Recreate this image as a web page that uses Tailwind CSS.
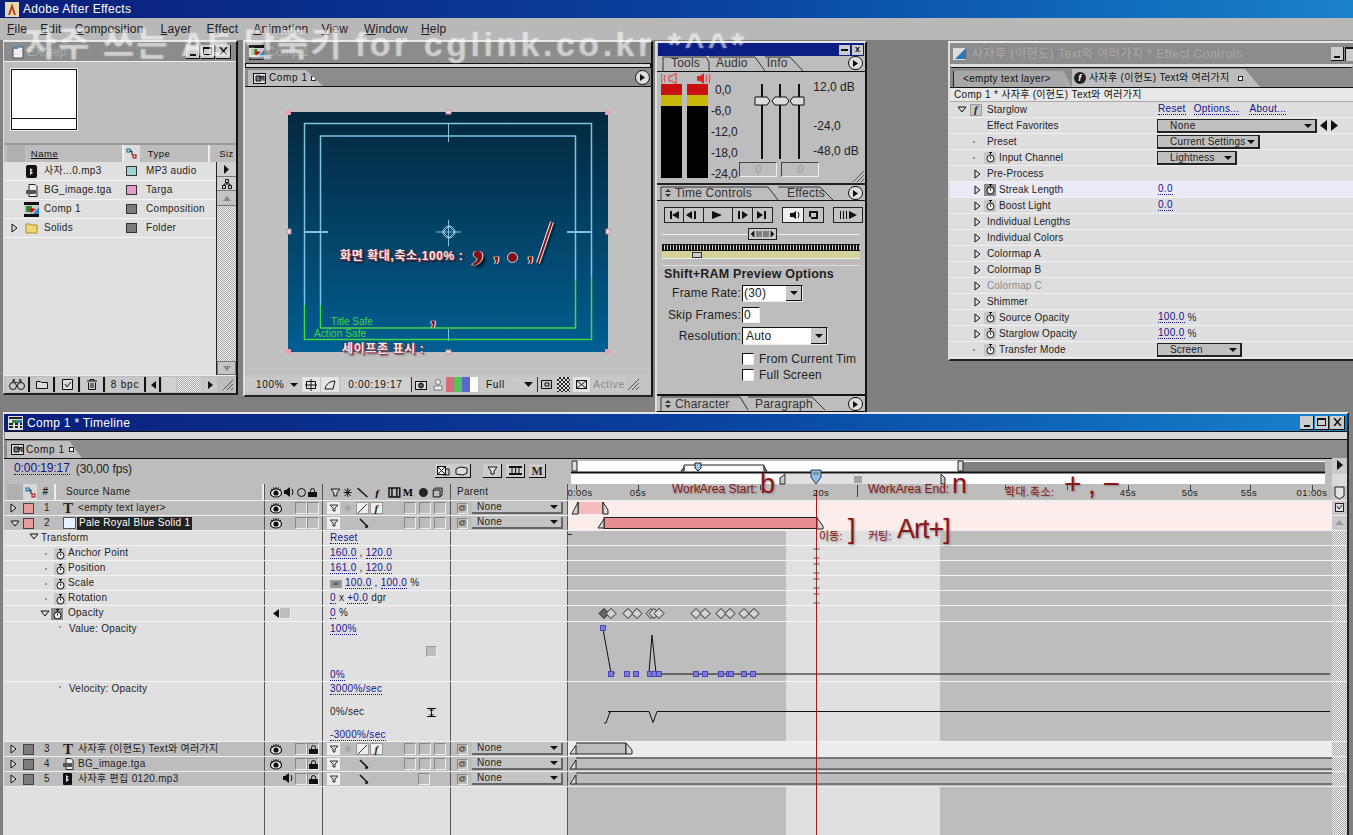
<!DOCTYPE html>
<html lang="en">
<head>
	<meta charset="UTF-8">
	<title>Adobe After Effects</title>
	<script src="https://cdn.jsdelivr.net/npm/@tailwindcss/browser@4"></script>
</head>
<body class="m-0">
<div id="app" class="relative w-[1353px] h-[835px] overflow-hidden bg-[#808080] text-[10px] leading-none text-[#111] font-['Liberation_Sans','Noto_Sans_CJK_KR',sans-serif]">

	<!-- app title + menu -->
	<div class="flex items-center h-[18px] pl-[5px] gap-[4px] bg-gradient-to-r from-[#0a1f7a] via-[#0a3f9e] to-[#1a82cc] text-white text-[12px]">
		<svg class="w-[14px] h-[15px]" viewBox="0 0 14 15"><rect width="14" height="15" fill="#e8d8b0"/><path d="M7 1L3 13h2l2-6 2 6h2z" fill="#b8401c"/></svg>
		<span class="tracking-[.3px]">Adobe After Effects</span>
	</div>
	<div id="menu" class="flex items-center h-[22px] bg-[#b8b8b8] text-[12px] text-[#222] pl-[7px] gap-[13px] tracking-[.2px]">
		<span><u>F</u>ile</span><span><u>E</u>dit</span><span><u>C</u>omposition</span><span class="ml-[4px]"><u>L</u>ayer</span><span class="ml-[2px]">E<u>f</u>fect</span><span class="ml-[2px]"><u>A</u>nimation</span><span><u>V</u>iew</span><span class="ml-[3px]"><u>W</u>indow</span><span><u>H</u>elp</span>
	</div>

	<!-- project window -->
	<div class="absolute left-[3px] top-[40px] w-[235px] h-[355px] flex flex-col bg-[#bdbdbd] border-t-2 border-[#e8e8e8] border-l border-r-2 border-b-2 border-r-[#111] border-b-[#222] border-l-[#ddd]">
		<div class="flex items-center h-[19px] bg-[#8c8c8c] pl-[8px] pr-[5px] text-[#aaa] text-[12px]">
			<svg class="w-[12px] h-[14px] mr-[3px]" viewBox="0 0 12 14"><rect x="1" y="2" width="10" height="11" fill="#eee" stroke="#555"/><rect x="1" y="1" width="5" height="3" fill="#4a90c8"/></svg>
			<span class="flex-1">EX.aep *</span>
			<span id="winBtns1" class="flex gap-[1px]"></span>
		</div>
		<div class="h-[82px] pl-[7px] pt-[7px] border-t border-[#eee]">
			<div class="w-[66px] h-[61px] border border-[#111] outline outline-1 outline-[#eee] bg-white flex flex-col justify-end"><div class="h-[11px] border-t border-[#111]"></div></div>
		</div>
		<div class="flex h-[19px] items-center bg-[#bdbdbd] border-t-2 border-[#999] text-[9.5px] tracking-[.5px]">
			<div class="w-[18px] h-full ml-[3px] bg-[#b0b0b0]"></div>
			<div class="w-[100px] pl-[6px] border-r-2 border-[#eee] h-full flex items-center"><u>Name</u></div>
			<div class="w-[16px] h-full flex items-center justify-center bg-[#ddd]"><svg class="w-[11px] h-[11px]" viewBox="0 0 11 11"><rect x="1" y="1" width="3" height="3" fill="none" stroke="#06a"/><rect x="7" y="7" width="3" height="3" fill="none" stroke="#a00"/><path d="M4 3h2v4" stroke="#111" fill="none"/></svg></div>
			<div class="w-[71px] pl-[8px] border-r-2 border-[#eee] h-full flex items-center">Type</div>
			<div class="pl-[9px] w-[26px] overflow-hidden whitespace-nowrap">Siz</div>
		</div>
		<div class="flex flex-1 min-h-0">
			<div id="projRows" class="w-[213px] bg-[#e0e0e0] border-r border-[#222]"></div>
			<div class="flex-1 flex flex-col bg-[repeating-conic-gradient(#aaa_0_25%,#eee_0_50%)] bg-[length:2px_2px]">
				<div class="h-[15px] bg-[#d0d0d0] flex items-center justify-center border-b border-[#777]"><svg class="w-[7px] h-[9px]" viewBox="0 0 7 9"><path d="M1 0l5 4.500L1 9z" fill="#111"/></svg></div>
				<div class="h-[14px] bg-[#d0d0d0] flex items-center justify-center border-b border-[#777]"><svg class="w-[10px] h-[10px]" viewBox="0 0 10 10"><path d="M3.500.5h3v3h-3zM.5 6.500h3v3h-3zM6.500 6.500h3v3h-3zM5 3.500v1.500M2 6.500V5h6v1.500" stroke="#111" fill="none"/></svg></div>
				<div class="h-[15px] bg-[#c4c4c4] flex items-center justify-center border-b border-[#777]"><svg class="w-[8px] h-[5px]" viewBox="0 0 8 5"><path d="M4 0l4 5H0z" fill="#888"/></svg></div>
				<div class="flex-1"></div>
				<div class="h-[14px] bg-[#c4c4c4] flex items-center justify-center border border-[#777]"><svg class="w-[8px] h-[5px]" viewBox="0 0 8 5"><path d="M4 5L0 0h8z" fill="#888"/></svg></div>
			</div>
		</div>
		<div class="flex items-center h-[18px] bg-[#bdbdbd] pl-[2px] gap-[1px] border-t border-[#eee]">
			<span class="w-[24px] h-[15px] bg-[#c8c8c8] border-r-2 border-[#111] flex items-center justify-center"><svg class="w-[16px] h-[11px]" viewBox="0 0 16 11"><circle cx="4" cy="7" r="3.500" fill="#ccc" stroke="#111"/><circle cx="12" cy="7" r="3.500" fill="#ccc" stroke="#111"/><path d="M3 3l1-3h2v4h4V0h2l1 3" fill="#444"/></svg></span>
			<span class="w-[24px] h-[15px] bg-[#c8c8c8] border-r-2 border-[#111] flex items-center justify-center"><svg class="w-[12px] h-[9px]" viewBox="0 0 12 9"><path d="M.5 1.500h4l1 1h6v6H.5z" fill="#ddd" stroke="#111"/></svg></span>
			<span class="w-[24px] h-[15px] bg-[#c8c8c8] border-r-2 border-[#111] flex items-center justify-center"><svg class="w-[11px] h-[11px]" viewBox="0 0 11 11"><path d="M.5.5h10v10H.5zM3 5l2 3 4-5" fill="#ddd" stroke="#111"/></svg></span>
			<span class="w-[24px] h-[15px] bg-[#c8c8c8] border-r-2 border-[#111] flex items-center justify-center"><svg class="w-[10px] h-[11px]" viewBox="0 0 10 11"><path d="M0 2h10M3 2V.5h4V2M1.500 3.500v7h7v-7M4 4v5M6 4v5" fill="none" stroke="#111"/></svg></span>
			<span class="w-[40px] h-[15px] bg-[#c8c8c8] border-r-2 border-[#111] flex items-center justify-center tracking-[.8px]">8 bpc</span>
			<span class="w-[14px] h-[15px] bg-[#c8c8c8] border-r-2 border-[#111] flex items-center justify-center"><svg class="w-[5px] h-[8px]" viewBox="0 0 5 8"><path d="M5 0L0 4l5 4z" fill="#111"/></svg></span>
			<span class="w-[14px] h-[15px] bg-[#d0d0d0]"></span>
			<span class="w-[25px] h-[15px] bg-[repeating-conic-gradient(#aaa_0_25%,#eee_0_50%)] bg-[length:2px_2px]"></span>
			<span class="w-[14px] h-[15px] bg-[#c8c8c8] flex items-center justify-center"><svg class="w-[5px] h-[8px]" viewBox="0 0 5 8"><path d="M0 0l5 4-5 4z" fill="#111"/></svg></span>
			<svg class="w-[12px] h-[12px] ml-[4px]" viewBox="0 0 12 12"><path d="M1 11L11 1M5 11l6-6M9 11l2-2" stroke="#555" fill="none"/></svg>
		</div>
	</div>

	<!-- comp window -->
	<div class="absolute left-[243px] top-[40px] w-[410px] h-[357px] flex flex-col bg-[#bdbdbd] border-t-2 border-[#e8e8e8] border-l-2 border-l-[#ddd] border-r-2 border-b-2 border-r-[#111] border-b-[#222]">
		<div class="flex items-center h-[20px] bg-[#8c8c8c] pl-[4px] text-[12px] text-[#aaa]">
			<svg class="w-[15px] h-[15px] mr-[3px]" viewBox="0 0 15 15"><rect width="15" height="15" fill="#111"/><rect y="3" width="15" height="9" fill="#ccc"/><path d="M2 4h6v6H2z" fill="#383"/><path d="M6 6l6 1-5 4z" fill="#b11"/><path d="M15 5v7H9z" fill="#28c"/></svg>
			<span>Comp 1</span>
		</div>
		<div class="h-[7px] bg-[#8c8c8c] flex items-center"><div class="h-[5px] w-full border border-[#111] bg-[#d8d8d8]"></div></div>
		<div class="flex h-[18px] bg-[#8c8c8c] border-b border-[#111] pl-[3px] items-end">
			<div id="compTab" class="h-[16px] w-[75px] bg-[#bdbdbd] flex items-center gap-[3px] pl-[5px] text-[10px] tracking-[.6px] [clip-path:polygon(0_0,77%_0,100%_100%,0_100%)]">
				<svg class="w-[13px] h-[11px]" viewBox="0 0 13 11"><rect x=".5" y=".5" width="12" height="10" fill="#ddd" stroke="#111"/><path d="M3 3h5v5H3zM6 5l5-2v5" fill="#777" stroke="#111"/></svg>
				<span>Comp 1</span>
				<span class="w-[5px] h-[5px] border border-[#222] bg-white"></span>
			</div>
			<div class="flex-1"></div>
			<div class="w-[15px] h-[15px] rounded-full bg-[#ddd] border border-[#111] mb-[1px] mr-[1px] flex items-center justify-center"><svg class="w-[5px] h-[7px]" viewBox="0 0 5 7"><path d="M0 0l5 3.500L0 7z" fill="#111"/></svg></div>
		</div>
		<div class="flex-1 min-h-0 pt-[25px] pl-[43px] bg-[#c0c0c0]">
			<!-- comp picture -->
			<div class="relative w-[320px] h-[240px] bg-gradient-to-b from-[#03283f] to-[#005f92]">
				<svg class="absolute left-0 top-0 overflow-visible w-[320px] h-[240px]" viewBox="288 112 320 240">
					<g fill="none" stroke="#7ec4e4" stroke-width="1.500">
						<path d="M304.500 305V123.500H591.500V277"/>
						<path d="M320.500 305V136H575.500V280"/>
						<path d="M448.500 123v19M448.500 329v12" stroke-width="1"/>
						<path d="M304 232h24M567 232h24" stroke-width="2"/>
						<path d="M448.500 220v26M436 232h25" stroke-width="1"/>
						<circle cx="449" cy="232" r="6" stroke-width="1"/>
						<path d="M449 226l6 6-6 6-6-6z" stroke="#cde" stroke-width="1"/>
					</g>
					<g fill="none" stroke="#44d840" stroke-width="1.500">
						<path d="M304.500 305v34.500H591.500V277"/>
						<path d="M320.500 305V328H575.500V280"/>
					</g>
					<g fill="#eb9cb0"><rect x="286" y="110" width="5" height="5"/><rect x="605" y="110" width="5" height="5"/><rect x="286" y="349" width="5" height="5"/><rect x="605" y="349" width="5" height="5"/></g>
					<g fill="#e0e0e0" stroke="#d08898"><rect x="446" y="110" width="5" height="4"/><rect x="446" y="350" width="5" height="4"/><rect x="287" y="229" width="4" height="5"/><rect x="606" y="229" width="4" height="5"/></g>
					<path d="M538 263l14-41" stroke="#012" stroke-opacity=".5" stroke-width="4" transform="translate(2 2)"/>
					<path d="M538 263l14-41" stroke="#eee" stroke-width="4"/>
					<path d="M538 263l14-41" stroke="#8c0b12" stroke-width="2"/>
				</svg>
				<span class="absolute left-[52px] top-[138px] text-[12px] font-bold tracking-[.6px] text-[#e8e8e8] [text-shadow:1px_1px_0_#a23040,-1px_0_0_#a23040,2px_2px_2px_#012] whitespace-nowrap">화면 확대,축소,100% :</span>
				<span class="absolute left-[184px] top-[106px] text-[48px] font-bold text-[#8c0b12] [text-shadow:1px_0_0_#ddd,-1px_0_0_#ddd,3px_3px_3px_#012] font-['Liberation_Serif',serif]">,</span>
				<span class="absolute left-[205px] top-[128px] text-[24px] font-bold text-[#8c0b12] [text-shadow:1px_0_0_#eee,-1px_0_0_#eee]">,</span>
				<span class="absolute left-[220px] top-[141px] w-[9px] h-[9px] rounded-full bg-[#8c0b12] outline outline-1 outline-[#ddd]"></span>
				<span class="absolute left-[239px] top-[128px] text-[24px] font-bold text-[#8c0b12] [text-shadow:1px_0_0_#eee,-1px_0_0_#eee]">,</span>
				<span class="absolute left-[43px] top-[205px] text-[10px] text-[#44d840]">Title Safe</span>
				<span class="absolute left-[26px] top-[217px] text-[10px] text-[#44d840] tracking-[.1px]">Action Safe</span>
				<span class="absolute left-[142px] top-[194px] text-[22px] font-bold text-[#8c0b12] [text-shadow:1px_0_0_#eee,-1px_0_0_#eee]">,</span>
				<span class="absolute left-[54px] top-[231px] text-[12px] font-bold text-[#e8e8e8] [text-shadow:1px_1px_0_#a23040,-1px_0_0_#a23040,2px_2px_2px_#555] whitespace-nowrap tracking-[.6px]">세이프존 표시 :</span>
			</div>
		</div>
		<div class="flex items-center h-[19px] bg-[#c4c4c4] gap-[1px] pl-[1px] mb-[1px] text-[10px] tracking-[.7px]">
			<span class="w-[55px] h-[15px] bg-[#c8c8c8] flex items-center pl-[10px] gap-[6px]">100%<svg class="w-[8px] h-[4px]" viewBox="0 0 8 4"><path d="M0 0h8L4 4z" fill="#111"/></svg></span>
			<span class="w-[18px] h-[15px] bg-[#e4e4e4] flex items-center justify-center"><svg class="w-[12px] h-[12px]" viewBox="0 0 12 12"><path d="M1.500 2.500h9v7h-9zM6 0v12M0 6h12" fill="none" stroke="#111"/></svg></span>
			<span class="w-[18px] h-[15px] bg-[#e4e4e4] flex items-center justify-center"><svg class="w-[12px] h-[10px]" viewBox="0 0 12 10"><path d="M1 9C2 4 6 1 11 1L9 9z" fill="none" stroke="#111"/></svg></span>
			<span class="w-[69px] h-[15px] bg-[#d0d0d0] flex items-center justify-center ml-[1px]">0:00:19:17</span>
			<span class="w-[18px] h-[15px] bg-[#c8c8c8] flex items-center justify-center border-l border-[#333]"><svg class="w-[12px] h-[10px]" viewBox="0 0 12 10"><rect x=".5" y="1.500" width="11" height="8" fill="#ddd" stroke="#111"/><circle cx="6" cy="5.500" r="2.500" fill="#555" stroke="#111"/></svg></span>
			<span class="w-[15px] h-[15px] flex items-center justify-center"><svg class="w-[10px] h-[12px]" viewBox="0 0 10 12"><circle cx="5" cy="3" r="2.500" fill="#eee" stroke="#777"/><path d="M1 11V7h8v4z" fill="#eee" stroke="#777"/></svg></span>
			<span class="flex w-[32px] h-[15px]"><i class="w-[8px] bg-[#d86a7a]"></i><i class="w-[8px] bg-[#58c060]"></i><i class="w-[8px] bg-[#5868d0]"></i><i class="w-[8px] bg-white"></i></span>
			<span class="w-[56px] h-[15px] bg-[#c8c8c8] flex items-center pl-[6px] ml-[1px] justify-between pr-[3px]">Full<svg class="w-[9px] h-[5px]" viewBox="0 0 9 5"><path d="M0 0h9L4.500 5z" fill="#111"/></svg></span>
			<span class="w-[17px] h-[15px] bg-[#c8c8c8] flex items-center justify-center border-l border-[#333]"><svg class="w-[11px] h-[9px]" viewBox="0 0 11 9"><path d="M.5.5h10v8H.5zM4 3h4v3H4z" fill="none" stroke="#111"/></svg></span>
			<span class="w-[17px] h-[15px] bg-[repeating-conic-gradient(#222_0_25%,#ddd_0_50%)] bg-[length:4px_4px] border-x-2 border-[#c8c8c8]"></span>
			<span class="w-[17px] h-[15px] bg-[#e4e4e4] flex items-center justify-center"><svg class="w-[11px] h-[9px]" viewBox="0 0 11 9"><path d="M.5.5h10v8H.5zM.5.500l10 8M10.500.500l-10 8" fill="none" stroke="#111"/></svg></span>
			<span class="w-[34px] h-[15px] bg-[#c8c8c8] text-[#888] flex items-center justify-center ml-[1px]">Active</span>
			<svg class="w-[13px] h-[13px]" viewBox="0 0 13 13"><path d="M1 12L12 1M5 12l7-7M9 12l3-3" stroke="#555" fill="none"/></svg>
		</div>
	</div>

	<!-- audio / time controls palette -->
	<div class="absolute left-[655px] top-[41px] w-[212px] h-[372px] flex flex-col bg-[#bdbdbd] border-t-2 border-[#e8e8e8] border-r-2 border-b-2 border-l-2 border-l-[#ddd] border-r-[#111] border-b-[#111] text-[12px]">
		<div class="flex items-center justify-end h-[13px] bg-[#0c1e84] mx-[1px] pr-[1px] gap-[2px]">
			<span class="w-[11px] h-[10px] bg-[#ccc] flex items-center justify-center"><i class="w-[7px] h-[2px] bg-[#111]"></i></span>
			<span class="w-[11px] h-[10px] bg-[#ccc] flex items-center justify-center text-[9px] font-bold">x</span>
		</div>
		<!-- tabs -->
		<div class="flex h-[16px] items-end border-b border-[#111] pl-[14px] text-[12px] text-[#333] tracking-[.2px] relative">
			<span class="h-[14px]">Tools</span>
			<span class="h-[14px] ml-[16px]">Audio</span>
			<span class="h-[14px] ml-[19px]">Info</span>
			<svg class="absolute left-0 top-0 w-[190px] h-[16px]" viewBox="0 0 190 16"><path d="M6 16V1h43l3 5v10M52 1h46l10 14M108 1h25l13 14" fill="none" stroke="#333"/></svg>
			<span class="ml-auto w-[15px] h-[14px] rounded-full bg-[#ddd] border border-[#111] mb-[1px] mr-[2px] flex items-center justify-center"><svg class="w-[5px] h-[7px]" viewBox="0 0 5 7"><path d="M0 0l5 3.500L0 7z" fill="#111"/></svg></span>
		</div>
		<!-- audio -->
		<div class="relative h-[113px] border-b-2 border-[#222]">
			<svg class="absolute left-[4px] top-[1px] w-[50px] h-[11px]" viewBox="0 0 50 11"><path d="M8 3v5h3l4 3V0l-4 3zM4 2q-2 3 0 7M1 1q-2 4 0 9" fill="none" stroke="#e33"/><path d="M36 3v5h3l4 3V0l-4 3z" fill="#d22"/><path d="M45 2q2 3 0 7M48 1q2 4 0 9" fill="none" stroke="#e33"/></svg>
			<div class="flex gap-[5px] pl-[4px] pt-[12px]">
				<div class="w-[21px] h-[94px] flex flex-col bg-black"><i class="h-[11px] bg-[#c81010]"></i><i class="h-[11px] bg-[#c8b808]"></i></div>
				<div class="w-[21px] h-[94px] flex flex-col bg-black"><i class="h-[11px] bg-[#c81010]"></i><i class="h-[11px] bg-[#c8b808]"></i></div>
				<div class="flex flex-col gap-[9px] text-[12px] text-[#222] -ml-[2px] tracking-[-.2px]"><span class="pl-[4px]">0,0</span><span>-6,0</span><span>-12,0</span><span>-18,0</span><span>-24,0</span></div>
				<div class="relative flex-1">
					<svg class="absolute left-[8px] top-0 w-[60px] h-[76px]" viewBox="0 0 60 76">
						<g fill="#111"><rect x="11" y="0" width="2" height="75"/><rect x="29" y="0" width="2" height="75"/><rect x="48" y="0" width="2" height="75"/></g>
						<g fill="#ddd" stroke="#111"><path d="M5 13h12l3 4-3 4H5zM22 17l3-4h11l3 4-3 4H25zM40 17l3-4h11v8H43z"/></g>
					</svg>
					<div class="absolute left-[71px] top-[-3px] text-[#222] whitespace-nowrap">12,0 dB</div>
					<div class="absolute left-[71px] top-[36px] text-[#222] whitespace-nowrap">-24,0</div>
					<div class="absolute left-[71px] top-[61px] text-[#222] whitespace-nowrap">-48,0 dB</div>
					<div class="absolute left-[-3px] top-[78px] flex gap-[4px]">
						<span class="w-[38px] h-[15px] border border-[#444] border-r-[#eee] border-b-[#eee] text-center text-[#999] text-[11px] pt-[1px]">0</span>
						<span class="w-[38px] h-[15px] border border-[#444] border-r-[#eee] border-b-[#eee] text-center text-[#999] text-[11px] pt-[1px]">0</span>
					</div>
				</div>
			</div>
			<svg class="absolute right-0 bottom-0 w-[13px] h-[13px]" viewBox="0 0 13 13"><path d="M1 12L12 1M5 12l7-7M9 12l3-3" stroke="#555" fill="none"/></svg>
		</div>
		<div class="relative flex h-[16px] items-end border-b border-[#111] pl-[4px] text-[#333] tracking-[.2px]">
			<span class="h-[15px] w-[119px] px-[2px] flex gap-[4px] items-center">
				<svg class="w-[6px] h-[8px] shrink-0 ml-[2px]" viewBox="0 0 6 8"><path d="M3 0l3 3H0zM3 8l3-3H0z" fill="#333"/></svg>Time Controls</span>
			<span class="h-[13px] pl-[7px]">Effects</span>
			<svg class="absolute left-0 top-0 w-[190px] h-[16px]" viewBox="0 0 190 16"><path d="M4 16V2h107l10 13M121 2h42l13 13" fill="none" stroke="#333"/></svg>
			<span class="ml-auto w-[15px] h-[14px] rounded-full bg-[#ddd] border border-[#111] mr-[2px] flex items-center justify-center"><svg class="w-[5px] h-[7px]" viewBox="0 0 5 7"><path d="M0 0l5 3.500L0 7z" fill="#111"/></svg></span>
		</div>
		<!-- transport -->
		<div class="flex gap-[9px] pl-[7px] pt-[6px] h-[22px]">
			<div class="flex h-[16px] border border-[#222] bg-[#c4c4c4]">
				<svg class="w-[107px] h-[14px]" viewBox="0 0 107 14"><g fill="#111"><path d="M5 3h2v8H5zM14 3v8l-7-4z"/><path d="M27 3v8l-6-4zM29 3h2v8h-2z"/><path d="M47 3l10 4-10 4z"/><path d="M73 3h2v8h-2zM77 3l6 4-6 4z"/><path d="M92 3l6 4-6 4zM99 3h2v8h-2z"/></g><path d="M18.500 0v14M38.500 0v14M67.500 0v14M87.500 0v14" stroke="#222"/></svg>
			</div>
			<div class="flex h-[16px] border border-[#222] bg-[#c4c4c4] w-[42px]">
				<svg class="w-[40px] h-[14px]" viewBox="0 0 40 14"><rect width="20" height="14" fill="#eee"/><path d="M7 5v4h3l3 2V3l-3 2z" fill="#111"/><path d="M15 4q2 3 0 6" stroke="#111" fill="none"/><path d="M20.500 0v14" stroke="#222"/><path d="M27 9V4h7v6h-6" stroke="#111" stroke-width="2" fill="none"/></svg>
			</div>
			<div class="flex h-[16px] border border-[#222] bg-[#c4c4c4] w-[30px]">
				<svg class="w-[28px] h-[14px]" viewBox="0 0 28 14"><g fill="#111"><path d="M6 3h1v8H6zM9 3h1v8H9zM12 3h1v8h-1zM15 3l8 4-8 4z"/></g></svg>
			</div>
		</div>
		<div class="relative h-[21px]">
			<div class="absolute left-[5px] right-[5px] top-[11px] h-[1px] bg-[#eee]"></div>
			<div class="absolute left-[91px] top-[5px] w-[29px] h-[12px] border border-[#222] bg-[#c8c8c8] flex items-center justify-between px-[2px]"><svg class="w-[23px] h-[8px]" viewBox="0 0 23 8"><path d="M3 1L0 4l3 3zM20 1l3 3-3 3zM6 1v6M8 1v6M10 1v6M13 1v6M15 1v6M17 1v6" fill="#111" stroke="#333"/></svg></div>
		</div>
		<div class="mx-[5px] h-[7px] bg-[repeating-linear-gradient(90deg,#111_0_2px,#ccc_2px_3px)] border-y border-[#111]"></div>
		<div class="relative mx-[5px] h-[8px] bg-[#d4d49a] border-b border-[#eee]">
			<span class="absolute left-[30px] top-[1px] w-[10px] h-[6px] bg-[#ccc] border border-[#333]"></span>
		</div>
		<div class="mx-[5px] mt-[6px] h-[1px] bg-[#ddd]"></div>
		<div class="pl-[7px] pt-[2px] font-bold text-[12.5px] text-[#222] tracking-[.2px] h-[16px] whitespace-nowrap">Shift+RAM Preview Options</div>
		<div class="flex flex-col text-[12px] text-[#222] tracking-[.2px]">
			<div class="flex items-center h-[22px]"><span class="w-[85px] text-right pr-[1px]">Frame Rate:</span>
				<span class="relative w-[61px] h-[17px] border border-[#111] border-b-[#eee] border-r-[#eee] bg-white pl-[1px] pt-[1px]">(30)<span class="absolute right-0 top-0 w-[16px] h-full bg-[#c8c8c8] flex items-center justify-center border-r border-b border-[#111]"><svg class="w-[8px] h-[4px]" viewBox="0 0 8 4"><path d="M0 0h8L4 4z" fill="#111"/></svg></span></span></div>
			<div class="flex items-center h-[21px]"><span class="w-[85px] text-right pr-[1px]">Skip Frames:</span>
				<span class="w-[18px] h-[16px] border border-[#111] border-b-[#eee] border-r-[#eee] bg-white pl-[1px] pt-[1px]">0</span></div>
			<div class="flex items-center h-[22px]"><span class="w-[85px] text-right pr-[1px]">Resolution:</span>
				<span class="relative w-[86px] h-[18px] border border-[#111] border-b-[#eee] border-r-[#eee] bg-white pl-[3px] pt-[2px]">Auto<span class="absolute right-0 top-0 w-[16px] h-full bg-[#c8c8c8] flex items-center justify-center border-r border-b border-[#111]"><svg class="w-[8px] h-[4px]" viewBox="0 0 8 4"><path d="M0 0h8L4 4z" fill="#111"/></svg></span></span></div>
			<div class="flex items-center h-[17px] pl-[85px] mt-[3px] gap-[5px] whitespace-nowrap overflow-hidden"><span class="w-[12px] h-[12px] shrink-0 border border-[#111] border-b-[#eee] border-r-[#eee] bg-white"></span>From Current Tim</div>
			<div class="flex items-center h-[16px] pl-[85px] gap-[5px]"><span class="w-[12px] h-[12px] shrink-0 border border-[#111] border-b-[#eee] border-r-[#eee] bg-white"></span>Full Screen</div>
		</div>
		<div class="relative mt-auto flex h-[17px] items-end border-t-2 border-[#111] pl-[4px] text-[#333] tracking-[.2px]">
			<span class="h-[15px] w-[89px] flex gap-[4px] items-center pl-[2px]"><svg class="w-[6px] h-[8px] shrink-0 ml-[2px]" viewBox="0 0 6 8"><path d="M3 0l3 3H0zM3 8l3-3H0z" fill="#333"/></svg>Character</span>
			<span class="h-[13px] pl-[5px]">Paragraph</span>
			<svg class="absolute left-0 top-0 w-[190px] h-[15px]" viewBox="0 0 190 15"><path d="M4 15V1h79l8 13M91 1h64l13 13" fill="none" stroke="#333"/></svg>
			<span class="ml-auto w-[15px] h-[14px] rounded-full bg-[#ddd] border border-[#111] mr-[2px] flex items-center justify-center"><svg class="w-[5px] h-[7px]" viewBox="0 0 5 7"><path d="M0 0l5 3.500L0 7z" fill="#111"/></svg></span>
		</div>
	</div>

	<!-- effect controls -->
	<div class="absolute left-[948px] top-[41px] w-[405px] h-[320px] flex flex-col bg-[#bdbdbd] border-t-2 border-[#e8e8e8] border-l-2 border-l-[#ddd] border-b-2 border-b-[#222]">
		<div class="flex items-center h-[21px] bg-[#8c8c8c] pl-[3px] text-[12px] text-[#aaa] tracking-[.5px]">
			<svg class="w-[14px] h-[15px] mr-[5px]" viewBox="0 0 14 15"><rect y="2" width="12" height="12" fill="#ddd"/><path d="M2 13L13 2v11z" fill="#2a78b8"/></svg>
			<span class="flex-1">사자후 (이현도) Text와 여러가지 * Effect Controls</span>
			<span class="w-[13px] h-[14px] bg-[#ccc] border-r border-b border-[#111] flex items-end justify-center pb-[2px] mr-[1px]"><i class="w-[6px] h-[2px] bg-[#111]"></i></span>
			<span class="w-[8px] h-[14px] bg-[#ccc] border-t-2 border-l border-[#111]"></span>
		</div>
		<div class="h-[4px] bg-[#ddd] border-b border-[#111] rounded-full"></div>
		<div class="flex h-[20px] bg-[#8c8c8c] border-b border-[#111] pl-[3px] items-end text-[10px] tracking-[.3px]">
			<span class="h-[16px] w-[119px] bg-[#a8a8a8] flex items-center pl-[9px] border-l border-[#222] [clip-path:polygon(0_0,93%_0,100%_100%,0_100%)]">&lt;empty text layer&gt;</span>
			<span class="h-[18px] w-[188px] bg-[#bdbdbd] flex items-center pl-[2px] gap-[3px] [clip-path:polygon(0_0,92%_0,100%_100%,0_100%)]">
				<span class="w-[12px] h-[12px] rounded-full bg-[#222] text-white text-[9px] italic font-bold flex items-center justify-center">f</span>사자후 (이현도) Text와 여러가지<i class="w-[5px] h-[5px] border border-[#222] bg-white ml-[5px]"></i></span>
		</div>
		<div class="h-[14px] bg-[#e8e8e8] pl-[4px] flex items-center text-[10px] tracking-[.3px] border-b border-[#aaa]">Comp 1 * 사자후 (이현도) Text와 여러가지</div>
		<div id="fxRows" class="flex-1 min-h-0 bg-[#dedede]"></div>
	</div>

	<!-- timeline window -->
	<div class="absolute left-[3px] top-[412px] w-[1346px] h-[423px] flex flex-col bg-[#8c8c8c] border-t-2 border-[#e8e8e8] border-l border-l-[#ddd] border-r-2 border-r-[#222]">
		<div class="flex items-center h-[17px] bg-gradient-to-r from-[#0a1f7a] via-[#0a3f9e] to-[#1a82cc] pl-[4px] pr-[2px] text-white text-[12px] tracking-[.3px]">
			<svg class="w-[15px] h-[14px] mr-[4px]" viewBox="0 0 15 14"><rect width="15" height="14" fill="#ddd"/><path d="M1 2h13M1 8h4M7 8h3M12 8h2M1 11h4M7 11h3M12 11h2" stroke="#222" stroke-width="2"/><path d="M4 4h5v3H4z" fill="#383"/><path d="M9 4h5v3H9z" fill="#28c"/></svg>
			<span class="flex-1">Comp 1 * Timeline</span>
			<span id="winBtns2" class="flex gap-[1px]"></span>
		</div>
		<div class="h-[9px] bg-[#d8d8d8] border-y border-[#111] ml-[1px]"></div>
		<div class="flex h-[19px] bg-[#8c8c8c] border-b border-[#111] pl-[3px] items-end text-[10px] tracking-[.6px]">
			<span class="h-[17px] w-[75px] bg-[#bdbdbd] flex items-center pl-[4px] gap-[2px] [clip-path:polygon(0_0,83%_0,100%_100%,0_100%)]">
				<svg class="w-[13px] h-[11px]" viewBox="0 0 13 11"><rect x=".5" y=".5" width="12" height="10" fill="#ddd" stroke="#111"/><path d="M3 3h5v5H3zM6 5l5-2v5" fill="#777" stroke="#111"/></svg>Comp 1<i class="w-[5px] h-[5px] border border-[#222] bg-white ml-[2px]"></i></span>
		</div>
		<div class="flex items-center h-[25px] bg-[#bdbdbd] pl-[10px] pb-[6px] text-[12px] text-[#222] tracking-[-.1px]">
			<span class="text-[#14148c] border-b border-dotted border-[#14148c]">0:00:19:17</span>
			<span class="ml-[6px]">(30,00 fps)</span>
			<div id="topBtns" class="flex items-center gap-[4px] ml-[303px] mt-[5px]">
				<span class="w-[36px] h-[14px] bg-[#ccc] flex items-center justify-around border-r border-b border-[#111]">
					<svg class="w-[13px] h-[10px]" viewBox="0 0 13 10"><rect x=".5" y=".5" width="8" height="8" fill="#eee" stroke="#111"/><path d="M.5.500l8 8M8.500.500l-8 8M9 3h3v6H6" stroke="#111" fill="none"/></svg>
					<svg class="w-[13px] h-[10px]" viewBox="0 0 13 10"><path d="M1 3l4-2 7 1v5l-4 2-7-1z" fill="#ddd" stroke="#111"/></svg></span>
				<span class="w-[4px]"></span>
				<span class="w-[19px] h-[14px] bg-[#ccc] flex items-center justify-center border-r border-b border-[#111]"><svg class="w-[11px] h-[9px]" viewBox="0 0 11 9"><path d="M1 1h9L7 5v3H4V5z" fill="#eee" stroke="#111"/></svg></span>
				<span class="w-[19px] h-[14px] bg-[#ccc] flex items-center justify-center border-r border-b border-[#111]"><svg class="w-[13px] h-[9px]" viewBox="0 0 13 9"><path d="M0 1h13M0 8h13" stroke="#111" stroke-width="2"/><path d="M3 1v7M6.500 1v7M10 1v7" stroke="#111"/></svg></span>
				<span class="w-[17px] h-[14px] bg-[#ccc] flex items-center justify-center font-['Liberation_Serif',serif] font-bold text-[12px] border-r border-b border-[#111]">M</span>
			</div>
		</div>
		<div id="tlRows" class="flex-1 min-h-0 flex flex-col bg-[#e0e0e0]"></div>
	</div>

	<!-- timeline canvas: nav bar, ruler, bars, keyframes, graphs, cursor -->
	<div class="absolute left-[568px] top-[458px] w-[764px] h-[377px]">
		<div class="absolute left-[3px] top-[3px] w-[754px] h-[23px] bg-white"></div>
		<div class="absolute left-[390px] top-[4px] w-[367px] h-[10px] bg-[#808080]"></div>
		<div class="absolute left-[3px] top-[16px] w-[754px] h-[10px] bg-white"></div>
		<svg id="tlSvg" class="absolute left-0 top-0 w-[764px] h-[377px]" viewBox="568 458 764 377"></svg>
		<div id="ruler" class="absolute left-0 top-[30px] w-[764px] h-[14px] text-[9.5px] tracking-[.4px] text-[#222]"></div>
		<span class="absolute left-[104px] top-[25px] text-[12px] text-[#8c1518] [text-shadow:1px_1px_2px_#888] whitespace-nowrap">WorkArea Start:</span>
		<span class="absolute left-[192px] top-[13px] text-[27px] text-[#8c1518] [text-shadow:1px_1px_2px_#888]">b</span>
		<span class="absolute left-[300px] top-[25px] text-[12px] text-[#8c1518] [text-shadow:1px_1px_2px_#888] whitespace-nowrap">WorkArea End:</span>
		<span class="absolute left-[384px] top-[13px] text-[27px] text-[#8c1518] [text-shadow:1px_1px_2px_#888]">n</span>
		<span class="absolute left-[437px] top-[29px] text-[11px] tracking-[.5px] text-[#8c1518] [text-shadow:1px_1px_2px_#888] whitespace-nowrap">확대.축소:</span>
		<span class="absolute left-[496px] top-[11px] text-[30px] tracking-[-1px] text-[#8c1518] [text-shadow:1px_1px_2px_#888] whitespace-nowrap">+ , −</span>
		<span class="absolute left-[251px] top-[73px] text-[11px] text-[#8c1518] [text-shadow:1px_1px_2px_#888]">이동:</span>
		<span class="absolute left-[280px] top-[58px] text-[27px] text-[#8c1518] [text-shadow:1px_1px_2px_#888]">]</span>
		<span class="absolute left-[300px] top-[73px] text-[11px] text-[#8c1518] [text-shadow:1px_1px_2px_#888]">커팅:</span>
		<span class="absolute left-[329px] top-[58px] text-[27px] text-[#8c1518] [text-shadow:1px_1px_2px_#888] whitespace-nowrap tracking-[-1px]">Art+]</span>
	</div>

	<!-- timeline side buttons -->
	<svg class="absolute left-[1332px] top-[458px] w-[15px] h-[72px]" viewBox="1332 458 15 72">
		<rect x="1332" y="458" width="15" height="72" fill="#c8c8c8"/>
		<path d="M1337 460l6 5-6 5z" fill="#111"/>
		<rect x="1332" y="474" width="15" height="12" fill="#dadada"/>
		<path d="M1335 487h9v9l-4.500 3-4.500-3z" fill="#e4e4e4" stroke="#222"/>
		<path d="M1332 500.500h15M1332 515.500h15" stroke="#eee"/>
		<rect x="1335.500" y="503.500" width="8" height="8" fill="#ddd" stroke="#222"/>
		<path d="M1337 506l2 3 3-4" fill="none" stroke="#222"/>
		<path d="M1339.500 520l4 5h-8z" fill="#999"/>
	</svg>

	<!-- watermark -->
	<div class="absolute left-[25px] top-[27px] text-[34px] font-bold text-white/35 whitespace-nowrap [text-shadow:0_0_2px_rgba(255,255,255,.4)]"><span class="tracking-[2px]">자주 쓰는 AE 단축키 </span><span class="tracking-[3.5px]">for cglink.co.kr *^^*</span></div>
</div>

<script>
	const stopwatch = (box) => `<span class="w-[12px] h-[12px] shrink-0 flex items-center justify-center ${box ? 'bg-[#8a8a8a]' : 'bg-[#c8c8c8]'}"><svg class="w-[9px] h-[11px]" viewBox="0 0 9 11"><path d="M3 .5h3M4.500 1v2" stroke="#111" fill="none"/><circle cx="4.500" cy="6.500" r="3.500" fill="#eee" stroke="#111"/><path d="M4.500 4.500v2" stroke="#111"/></svg></span>`;
	const triR = `<svg class="w-[7px] h-[10px] shrink-0" viewBox="0 0 7 10"><path d="M1 1l5 4-5 4z" fill="#ddd" stroke="#111"/></svg>`;
	const triD = `<svg class="w-[10px] h-[7px] shrink-0" viewBox="0 0 10 7"><path d="M1 1h8L5 6z" fill="#ddd" stroke="#111"/></svg>`;
	const dot = `<i class="w-[2px] h-[2px] bg-[#999] shrink-0"></i>`;
	const arrowD = `<svg class="w-[8px] h-[4px] shrink-0" viewBox="0 0 8 4"><path d="M0 0h8L4 4z" fill="#111"/></svg>`;
	const blue = 'text-[#14148c] border-b border-dotted border-[#14148c] tracking-[.3px]';

	const winBtns = `<span class="w-[14px] h-[14px] bg-[#ccc] border-r border-b border-[#111] flex items-end justify-center pb-[2px]"><i class="w-[6px] h-[2px] bg-[#111]"></i></span>
		<span class="w-[14px] h-[14px] bg-[#ccc] border-r border-b border-[#111] flex items-center justify-center"><i class="w-[9px] h-[8px] border border-t-2 border-[#111]"></i></span>
		<span class="w-[15px] h-[14px] bg-[#ccc] border-r border-b border-[#111] flex items-center justify-center"><svg class="w-[9px] h-[8px]" viewBox="0 0 9 8"><path d="M1 0l7 8M8 0L1 8" stroke="#111" stroke-width="1.500"/></svg></span>`;
	document.getElementById('winBtns1').innerHTML = winBtns;
	document.getElementById('winBtns2').innerHTML = winBtns;

	// project items
	const projIcons = [
		`<svg class="w-[11px] h-[13px]" viewBox="0 0 11 13"><rect width="11" height="13" rx="2" fill="#111"/><path d="M4 3l3 2-2 1 2 2-3 2z" fill="#ddd"/></svg>`,
		`<svg class="w-[12px] h-[13px]" viewBox="0 0 12 13"><path d="M3 .5h6l2 2v10H3z" fill="#eee" stroke="#222"/><rect y="6" width="10" height="4" fill="#555"/></svg>`,
		`<svg class="w-[15px] h-[15px]" viewBox="0 0 15 15"><rect width="15" height="15" fill="#111"/><rect y="3" width="15" height="9" fill="#ccc"/><path d="M2 4h6v6H2z" fill="#383"/><path d="M6 6l6 1-5 4z" fill="#b11"/><path d="M15 5v7H9z" fill="#28c"/></svg>`,
		`<svg class="w-[13px] h-[12px]" viewBox="0 0 13 12"><path d="M1 2h4l1 1h6v8H1z" fill="#f0d870" stroke="#a89030"/></svg>`
	];
	const projItems = [['사자...0.mp3', 'bg-[#9cd4d4]', 'MP3 audio'], ['BG_image.tga', 'bg-[#e49ccc]', 'Targa'], ['Comp 1', 'bg-[#7c7c7c]', 'Composition'], ['Solids', 'bg-[#7c7c7c]', 'Folder']];
	document.getElementById('projRows').innerHTML = projItems.map((p, i) => `
		<div class="flex items-center h-[19px] border-b border-[#f4f4f4] tracking-[.3px] text-[#222]">
			<span class="w-[8px] ml-[7px] shrink-0">${i === 3 ? triR : ''}</span>
			<span class="w-[25px] shrink-0 flex justify-center">${projIcons[i]}</span>
			<span class="w-[82px] shrink-0 whitespace-nowrap">${p[0]}</span>
			<span class="w-[11px] h-[10px] mr-[9px] shrink-0 border border-[#333] ${p[1]}"></span>
			<span class="whitespace-nowrap">${p[2]}</span>
		</div>`).join('');

	// effect controls rows
	const fx = [
		['Starglow', 'top'], ['Effect Favorites', 'fav'], ['Preset', 'dot', 'Current Settings', 'w-[103px]'], ['Input Channel', 'dotw', 'Lightness', 'w-[80px]'],
		['Pre-Process', 'tri'], ['Streak Length', 'triwh', '0.0'], ['Boost Light', 'triw', '0.0'], ['Individual Lengths', 'tri'], ['Individual Colors', 'tri'],
		['Colormap A', 'tri'], ['Colormap B', 'tri'], ['Colormap C', 'tri', null, null, true], ['Shimmer', 'tri'],
		['Source Opacity', 'triw', '100.0 %'], ['Starglow Opacity', 'triw', '100.0 %'], ['Transfer Mode', 'dotw', 'Screen', 'w-[85px]']
	];
	document.getElementById('fxRows').innerHTML = fx.map(r => {
		const [label, kind, val, w, dim] = r;
		let left = '';
		if (kind === 'top') left = `<span class="w-[10px] ml-[7px]">${triD}</span><span class="w-[12px] h-[12px] ml-[3px] mr-[5px] bg-[#c8c8c8] border border-[#999] flex items-center justify-center font-['Liberation_Serif',serif] italic font-bold text-[11px]">f</span>`;
		if (kind === 'fav') left = `<span class="w-[37px]"></span>`;
		if (kind === 'dot') left = `<span class="w-[37px] pl-[23px] flex">${dot}</span>`;
		if (kind === 'dotw') left = `<span class="w-[34px] pl-[23px] flex">${dot}</span>${stopwatch()}<span class="w-[3px]"></span>`;
		if (kind === 'tri') left = `<span class="w-[37px] pl-[24px]">${triR}</span>`;
		if (kind === 'triw' || kind === 'triwh') left = `<span class="w-[34px] pl-[24px]">${triR}</span>${stopwatch(kind === 'triwh')}<span class="w-[3px]"></span>`;
		let right = '';
		if (label === 'Starglow') right = `<span class="${blue}">Reset</span><span class="${blue} ml-[8px]">Options...</span><span class="${blue} ml-[10px]">About...</span>`;
		else if (kind === 'fav') right = `<span class="flex items-center justify-between w-[160px] h-[14px] -ml-[1px] pt-[2px] bg-[#c0c0c0] border border-[#222] border-r-2 border-b-2 pl-[12px] pr-[3px] tracking-[.5px]">None${arrowD}</span><svg class="w-[18px] h-[11px] ml-[3px]" viewBox="0 0 18 11"><path d="M7 0v11L0 5.500zM11 0v11l7-5.500z" fill="#111"/></svg>`;
		else if (w) right = `<span class="flex items-center justify-between ${w} h-[14px] -ml-[1px] pt-[2px] whitespace-nowrap bg-[#c0c0c0] border border-[#222] border-r-2 border-b-2 pl-[12px] pr-[3px] tracking-[.2px]">${val}${arrowD}</span>`;
		else if (val && val.includes('%')) right = `<span class="${blue}">100.0</span><span class="ml-[3px]">%</span>`;
		else if (val) right = `<span class="${blue}">${val}</span>`;
		const bg = kind === 'triwh' ? 'bg-[#eaeaf8]' : '';
		return `<div class="flex items-center h-[16px] border-b border-[#f0f0f0] tracking-[.15px] ${bg} ${dim ? 'text-[#8a8a8a]' : 'text-[#222]'}">
			<span class="flex items-center w-[208px] shrink-0 whitespace-nowrap">${left}${label}</span>
			<span class="flex items-center">${right}</span></div>`;
	}).join('');

	// timeline rows
	const cols = 'w-[261px] border-r border-[#555]';
	const boxSw = (on) => `<span class="w-[12px] h-[12px] border border-[#888] border-r-[#eee] border-b-[#eee] flex items-center justify-center shrink-0">${on || ''}</span>`;
	const eye = `<svg class="w-[12px] h-[11px] shrink-0" viewBox="0 0 12 11"><ellipse cx="6" cy="6" rx="5.500" ry="4" fill="#eee" stroke="#111" stroke-width="1.200"/><circle cx="6" cy="6" r="2.600" fill="#111"/><path d="M1 2l2 1.500M11 2L9 3.500M6 0v2M3.500.500l.8 1.800M8.500.500l-.8 1.800" stroke="#111"/></svg>`;
	const lock = `<svg class="w-[9px] h-[9px]" viewBox="0 0 9 9"><path d="M2.500 4V2.500a2 2 0 014 0V4" fill="none" stroke="#111"/><rect y="4" width="9" height="5" fill="#111"/></svg>`;
	const spk = `<svg class="w-[11px] h-[10px] shrink-0" viewBox="0 0 11 10"><path d="M0 3v4h2l4 3V0L2 3z" fill="#111"/><path d="M8 2q2 3 0 6" stroke="#111" fill="none"/></svg>`;
	const shy = `<span class="w-[13px] h-[12px] bg-[#eee] flex items-center justify-center shrink-0"><svg class="w-[10px] h-[8px]" viewBox="0 0 10 8"><path d="M1 1h8L6 4v3H4V4z" fill="#ddd" stroke="#333"/></svg></span>`;
	const star = `<span class="w-[14px] text-center text-[#999] text-[11px] shrink-0">✳</span>`;
	const slash = `<span class="w-[13px] h-[12px] bg-[#eee] border border-[#999] flex items-center justify-center shrink-0"><svg class="w-[9px] h-[9px]" viewBox="0 0 9 9"><path d="M0 9l9-9" stroke="#333"/></svg></span>`;
	const back = `<span class="w-[13px] h-[12px] flex items-center justify-center shrink-0"><svg class="w-[10px] h-[10px]" viewBox="0 0 10 10"><path d="M1 1l8 8M8 7v2H6" stroke="#111" stroke-width="1.500" fill="none"/></svg></span>`;
	const fxBtn = `<span class="w-[13px] h-[12px] bg-[#eee] border border-[#999] flex items-center justify-center font-['Liberation_Serif',serif] italic font-bold text-[11px] shrink-0">f</span>`;

	const work = `<div class="flex-1 flex"><i class="w-[218px] bg-[#bdbdbd]"></i><i class="w-[154px] bg-[#e0e0e0]"></i><i class="flex-1 bg-[#bdbdbd]"></i></div>`;
	const side = (inner) => `<div class="w-[15px] shrink-0 h-full bg-[repeating-conic-gradient(#aaa_0_25%,#eee_0_50%)] bg-[length:2px_2px] flex flex-col">${inner || ''}</div>`;

	const layerRow = (o) => `<div class="flex h-[15px] shrink-0 border-b border-[#eee] bg-[#bdbdbd] tracking-[.3px] text-[#222]">
		<div class="flex items-center ${cols} pl-[6px]">
			<span class="w-[13px] shrink-0">${o.open ? triD : triR}</span>
			<span class="w-[11px] h-[11px] shrink-0 ${o.box} border border-[#444] mr-[10px]"></span>
			<span class="w-[17px] shrink-0">${o.n}</span>
			<span class="w-[17px] shrink-0 pl-[2px]">${o.icon}</span>
			<span class="whitespace-nowrap ${o.sel ? 'bg-[#222] text-white px-[2px] h-[13px] flex items-center -ml-[1px]' : ''}">${o.name}</span>
		</div>
		<div class="flex items-center w-[58px] border-r border-[#555] pl-[3px] shrink-0">
			<span class="w-[16px] flex justify-center shrink-0 ${o.audio ? 'invisible' : ''}">${eye}</span>
			<span class="w-[11px] shrink-0"></span>
			<span class="flex ${o.audio ? '-ml-[13px]' : ''}">${o.audio ? `<span class="w-[13px] flex justify-center">${spk}</span>` : ''}${boxSw()}${boxSw(o.lock ? lock : '')}</span>
		</div>
		<div class="flex items-center w-[128px] border-r border-[#555] pl-[4px] gap-[1px] shrink-0">${o.mode}</div>
		<div class="flex items-center w-[117px] border-r border-[#555] pl-[6px] shrink-0">
			<span class="w-[11px] h-[11px] border border-[#888] border-r-[#eee] border-b-[#eee] text-[8px] flex items-center justify-center mr-[4px]">@</span>
			<span class="flex items-center justify-between w-[91px] h-[12px] bg-[#c4c4c4] border-b-2 border-r-2 border-[#666] pl-[5px] pr-[3px]">None${arrowD}</span>
		</div>
		<div class="flex-1 ${o.tl}"></div>
		${side()}
	</div>`;
	const mode3 = `${boxSw()}<span class="w-[1px]"></span>${boxSw()}<span class="w-[1px]"></span>${boxSw()}`;

	const propRow = (pad, icon, label, val, h, extra) => `<div class="flex ${h || 'h-[15px]'} shrink-0 border-b border-[#f4f4f4] bg-[#e0e0e0] tracking-[.25px] text-[#222]">
		<div class="flex items-start ${cols} ${pad} whitespace-nowrap pt-[2px] gap-[1px]">${icon}<span class="ml-[1px]">${label}</span></div>
		<div class="w-[58px] border-r border-[#555] shrink-0 pt-[2px] pl-[8px]">${extra || ''}</div>
		<div class="w-[128px] border-r border-[#555] pl-[7px] pt-[2px] shrink-0 whitespace-nowrap relative">${val}</div>
		<div class="w-[117px] border-r border-[#555] shrink-0"></div>
		${work}
		${side()}
	</div>`;
	const u = (t) => `<span class="${blue}">${t}</span>`;
	const T = `<span class="font-['Liberation_Serif',serif] font-bold text-[15px] leading-[12px]">T</span>`;
	const solid = `<span class="block w-[13px] h-[12px] bg-[#e8f2fc] border border-[#555]"></span>`;
	const tga = `<svg class="w-[11px] h-[12px]" viewBox="0 0 11 12"><path d="M3 .5h5l2 2v9H3z" fill="#eee" stroke="#222"/><rect y="5" width="9" height="4" fill="#555"/></svg>`;
	const mp3 = `<svg class="w-[9px] h-[12px]" viewBox="0 0 9 12"><rect width="9" height="12" rx="1" fill="#111"/><path d="M3 2l3 2-2 1 2 2-3 2z" fill="#ddd"/></svg>`;

	let html = `<div class="flex h-[17px] shrink-0 bg-[#bdbdbd] border-b border-[#eee] tracking-[.3px] text-[#222]">
		<div class="flex items-center ${cols}">
			<span class="w-[16px] h-full ml-[3px] bg-[#b0b0b0]"></span>
			<span class="w-[14px] h-full bg-[#d8d8d8] flex items-center justify-center"><svg class="w-[11px] h-[11px]" viewBox="0 0 11 11"><rect x="1" y="1" width="3" height="3" fill="none" stroke="#06a"/><rect x="7" y="7" width="3" height="3" fill="none" stroke="#a00"/><path d="M4 3h2v4" stroke="#111" fill="none"/></svg></span>
			<span class="w-[19px] text-center font-bold border-r-2 border-[#eee] h-full flex items-center justify-center">#</span>
			<span class="flex-1 pl-[10px] border-r-2 border-[#eee] h-full flex items-center">Source Name</span>
		</div>
		<div class="flex items-center w-[58px] border-r border-[#555] gap-[2px] pl-[5px] shrink-0">${eye}${spk}<i class="w-[9px] h-[9px] rounded-full border border-[#111]"></i>${lock}</div>
		<div class="flex items-center w-[128px] border-r border-[#555] pl-[7px] justify-between pr-[4px] shrink-0">
			<svg class="w-[118px] h-[11px]" viewBox="0 0 118 11"><path d="M1 2h9L7 6v3H4V6z" fill="#ddd" stroke="#111"/><path d="M18 1v9M14 5.500h8M15 2l6 7M21 2l-6 7" stroke="#111"/><path d="M28 1l10 9" stroke="#111" stroke-width="1.500"/><text x="46" y="10" font-size="11" font-weight="bold" font-style="italic" font-family="Liberation Serif">f</text><path d="M60 1h11v9H60zM63 1v9M68 1v9" fill="none" stroke="#111" stroke-width="1.500"/><text x="74" y="9.500" font-size="11" font-weight="bold" font-family="Liberation Serif">M</text><circle cx="95" cy="5.500" r="4.500" fill="#222"/><path d="M105 3h7v7h-7zM105 3l2-2h7v7l-2 2" fill="none" stroke="#111"/></svg>
		</div>
		<div class="flex items-center w-[117px] border-r border-[#555] pl-[6px] shrink-0">Parent</div>
		<div class="flex-1"></div>
		${side()}
	</div>`;
	const propIcon = dot.replace('shrink-0', 'shrink-0 mt-[5px]') + '<span class="w-[5px]"></span>' + stopwatch();
	const subIcon = dot.replace('shrink-0', 'shrink-0 mt-[2px]') + '<span class="w-[5px]"></span>';
	html += layerRow({open: false, box: 'bg-[#e89c9c]', n: 1, icon: T, name: '&lt;empty text layer&gt;', tl: 'bg-[#fcecea]', lock: false,
		mode: shy + star + slash + fxBtn + '<span class="w-[19px]"></span>' + mode3});
	html += layerRow({open: true, box: 'bg-[#e89c9c]', n: 2, icon: solid, name: 'Pale Royal Blue Solid 1', sel: true, tl: 'bg-[#fcecea]',
		mode: shy + '<span class="w-[15px]"></span>' + back + '<span class="w-[32px]"></span>' + mode3});
	html += propRow('pl-[25px] items-center', triD, 'Transform', u('Reset'));
	html += propRow('pl-[41px]', propIcon, 'Anchor Point', u('160.0') + ' , ' + u('120.0'));
	html += propRow('pl-[41px]', propIcon, 'Position', u('161.0') + ' , ' + u('120.0'));
	html += propRow('pl-[41px]', propIcon, 'Scale', `<span class="inline-block w-[12px] text-[8px] bg-[#999] text-center mr-[3px]">∞</span>` + u('100.0') + ' , ' + u('100.0') + ' %');
	html += propRow('pl-[41px]', propIcon, 'Rotation', u('0') + ' x ' + u('+0.0') + ' dgr');
	html += propRow('pl-[36px]', `<span class="mt-[2px]">${triD}</span>` + stopwatch(true) + '<span class="w-[2px]"></span>', 'Opacity', u('0') + ' %', 'h-[16px]',
		`<span class="flex items-center gap-[1px]"><svg class="w-[6px] h-[9px]" viewBox="0 0 6 9"><path d="M6 0v9L0 4.500z" fill="#111"/></svg><i class="w-[11px] h-[11px] bg-[#bdbdbd] border-r border-b border-[#eee]"></i></span>`);
	html += propRow('pl-[55px]', subIcon, 'Value: Opacity',
		`<div class="flex flex-col h-[56px] justify-between"><span>${u('100%')}</span><span class="absolute right-[13px] top-[24px] w-[11px] h-[11px] bg-[#bdbdbd] border border-[#999] border-r-[#eee] border-b-[#eee]"></span><span>${u('0%')}</span></div>`, 'h-[60px]');
	html += propRow('pl-[55px]', subIcon, 'Velocity: Opacity',
		`<div class="flex flex-col h-[56px] justify-between"><span>${u('3000%/sec')}</span><span>0%/sec</span><span class="absolute right-[13px] top-[24px] w-[12px] h-[12px] bg-[#ddd] flex items-center justify-center"><svg class="w-[9px] h-[9px]" viewBox="0 0 9 9"><path d="M0 .5h9M0 8.500h9M4.500 1v7M2.500 3l2-2 2 2M2.500 6l2 2 2-2" stroke="#111" fill="none"/></svg></span><span>${u('-3000%/sec')}</span></div>`, 'h-[60px]');
	html += layerRow({box: 'bg-[#7c7c7c]', n: 3, icon: T, name: '사자후 (이현도) Text와 여러가지', tl: 'bg-[#ececec]', lock: true,
		mode: shy + star + slash + fxBtn + '<span class="w-[19px]"></span>' + mode3});
	html += layerRow({box: 'bg-[#7c7c7c]', n: 4, icon: tga, name: 'BG_image.tga', tl: 'bg-[#bdbdbd]', lock: true,
		mode: shy + '<span class="w-[15px]"></span>' + back + '<span class="w-[32px]"></span>' + mode3});
	html += layerRow({box: 'bg-[#7c7c7c]', n: 5, icon: mp3, name: '사자후 편집 0120.mp3', tl: 'bg-[#bdbdbd]', lock: true, audio: true,
		mode: shy + '<span class="w-[15px]"></span>' + back + '<span class="w-[46px]"></span>' + boxSw()});
	html += `<div class="flex flex-1 min-h-0 bg-[#e0e0e0]"><div class="${cols}"></div><div class="w-[58px] border-r border-[#555] shrink-0"></div><div class="w-[128px] border-r border-[#555] shrink-0"></div><div class="w-[117px] border-r border-[#555] shrink-0"></div>${work}${side()}</div>`;
	document.getElementById('tlRows').innerHTML = html;

	// ruler labels
	const labels = [['0:00s', 580], ['05s', 638], ['20s', 821], ['45s', 1128], ['50s', 1190], ['55s', 1249], ['01:00s', 1312]];
	document.getElementById('ruler').innerHTML = labels.map(l => `<span class="absolute -translate-x-1/2 whitespace-nowrap" style="left:${l[1] - 568}px">${l[0]}</span>`).join('');

	// svg canvas, picture coordinates
	let s = '';
	// nav bar + work area
	s += `<path d="M572 461h5v10h-5zM958 461h5v10h-5z" fill="#ddd" stroke="#222"/>`;
	s += `<path d="M571 472.500h754" stroke="#111" stroke-width="2"/>`;
	s += `<path d="M684 470v-5h80v5" fill="#fff" stroke="#222"/><path d="M681 471l3-4v4zM764 466l3 5h-3z" fill="#ccc" stroke="#222"/>`;
	s += `<path d="M695 463h6v5l-3 3-3-3z" fill="#9cc8e8" stroke="#222"/>`;
	s += `<path d="M786 474h154v10H786z" fill="#e0e0e0"/><path d="M780 484v-6l5-4v10zM941 474l4 4v6h-4z" fill="#ccc" stroke="#222"/>`;
	s += `<path d="M811 470h10v7l-5 7-5-7z" fill="#8cc0e8" stroke="#335"/><path d="M814 472v3M816 472v3M818 472v3M855 476v7M857 476v7M859 476v7M861 476v7" stroke="#666"/>`;
	// ruler ticks
	for (const x of [576, 638, 699, 760, 882, 944, 1005, 1067, 1128, 1190, 1250, 1312]) s += `<path d="M${x + .5} 485v5" stroke="#444"/>`;
	s += `<path d="M857.500 485v12" stroke="#444"/>`;
	// layer bars
	s += `<rect x="578" y="502" width="25" height="12" fill="#f4bcbc"/><path d="M578 514v-12M603 502v12" stroke="#222"/><path d="M572 514l6-12v12zM603 502l5 8v4h-5z" fill="#d8d8d8" stroke="#222"/>`;
	s += `<rect x="604" y="517.500" width="213" height="11" fill="#e58d8f" stroke="#222"/><path d="M598 528l6-9v9zM817 518l6 8v3h-6z" fill="#d8d8d8" stroke="#222"/>`;
	s += `<rect x="576" y="743" width="50" height="11" fill="#bdbdbd"/><path d="M576 743h50v11h-50" fill="none" stroke="#222"/><path d="M570 754l6-9v9zM626 743l6 7v4h-6z" fill="#d8d8d8" stroke="#222"/>`;
	for (const y of [758, 773]) s += `<path d="M576 ${y}h756M576 ${y + 11}h756" stroke="#333"/><path d="M570 ${y + 11}l6-9v9z" fill="#d8d8d8" stroke="#222"/>`;
	// keyframes
	const keys = [604, 611, 628, 637, 651, 654, 659, 696, 705, 721, 730, 744, 754];
	keys.forEach((x, i) => {
		s += `<path d="M${x - 5} 613.500l5-5 5 5-5 5z" fill="${i === 0 ? '#666' : '#d4d4d4'}" stroke="#222"/>`;
	});
	// graphs
	s += `<path d="M603 629l8 44h4M649 673l3-38 4 38M656 674H1330" fill="none" stroke="#111"/>`;
	s += `<path d="M604 723h2l4-11h1M608 711.500H649l4 11 4-11H1330" fill="none" stroke="#111"/>`;
	s += `<rect x="600.500" y="625.500" width="5" height="5" fill="#7c78dc" stroke="#4848c0"/>`;
	for (const x of [611, 627, 636, 650, 654, 659, 696, 705, 721, 729, 731, 744, 753]) s += `<rect x="${x - 2.5}" y="671.500" width="5" height="5" fill="#7c78dc" stroke="#4848c0"/>`;
	// current time
	s += `<path d="M816.500 490V835" stroke="#a81818"/>`;
	for (const y of [553, 568, 583, 598]) s += `<path d="M813.500 ${y - 4}h6M816.500 ${y - 4}v9M813.500 ${y + 5}h6" stroke="#7a3a3a"/>`;
	s += `<path d="M566 534.500h6" stroke="#222"/>`;
	document.getElementById('tlSvg').innerHTML = s;
</script>
</body>
</html>
